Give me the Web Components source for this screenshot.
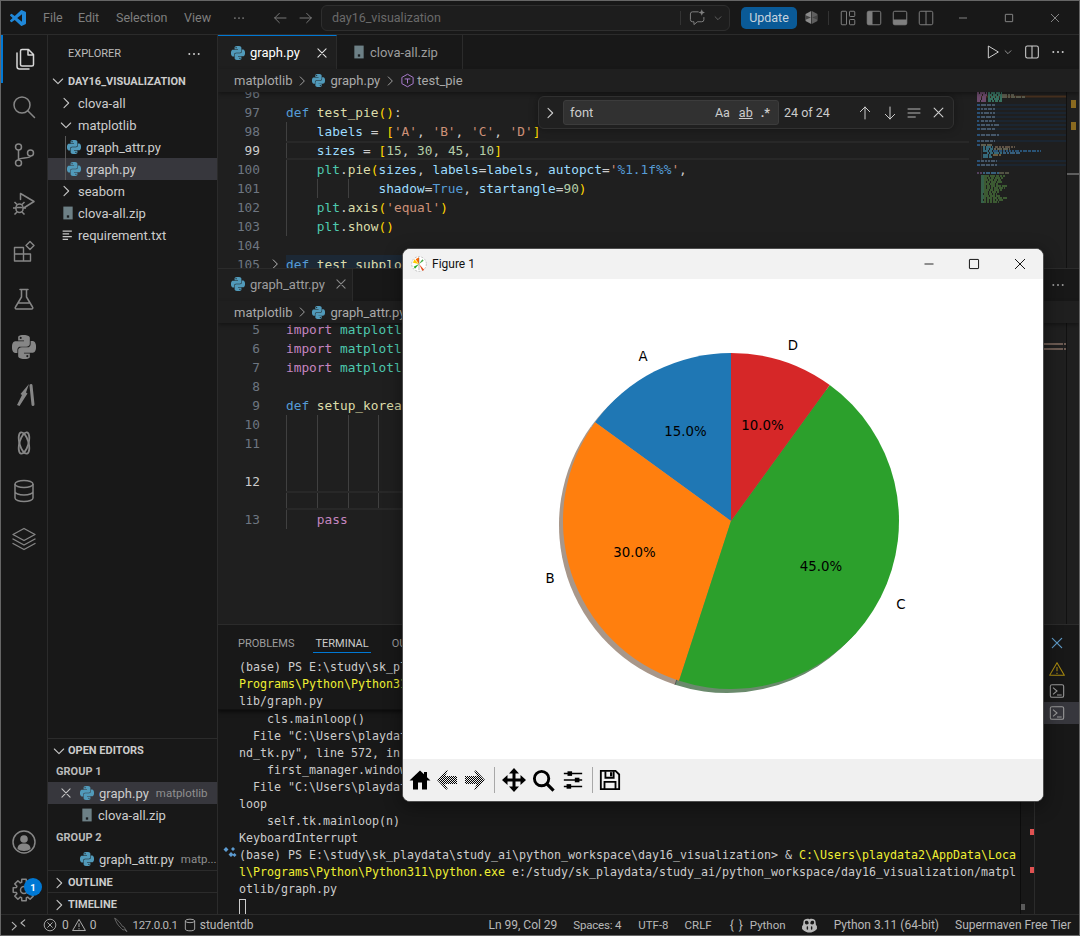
<!DOCTYPE html>
<html lang="en"><head><meta charset="utf-8"><title>VS Code with Figure 1</title>
<style>html,body{margin:0;padding:0;background:#181818}vs-app{display:block}</style></head>
<body><vs-app></vs-app>
<script>
const PY="M14.25.18l.9.2.73.26.59.3.45.32.34.34.25.34.16.33.1.3.04.26.02.2-.01.13V8.5l-.05.63-.13.55-.21.46-.26.38-.3.31-.33.25-.35.19-.35.14-.33.1-.3.07-.26.04-.21.02H8.77l-.69.05-.59.14-.5.22-.41.27-.33.32-.27.35-.2.36-.15.37-.1.35-.07.32-.04.27-.02.21v3.06H3.17l-.21-.03-.28-.07-.32-.12-.35-.18-.36-.26-.36-.36-.35-.46-.32-.59-.28-.73-.21-.88-.14-1.05-.05-1.23.06-1.22.16-1.04.24-.87.32-.71.36-.57.4-.44.42-.33.42-.24.4-.16.36-.1.32-.05.24-.01h.16l.06.01h8.16v-.83H6.18l-.01-2.75-.02-.37.05-.34.11-.31.17-.28.25-.26.31-.23.38-.2.44-.18.51-.15.58-.12.64-.1.71-.06.77-.04.84-.02 1.27.05zm-6.3 1.98l-.23.33-.08.41.08.41.23.34.33.22.41.09.41-.09.33-.22.23-.34.08-.41-.08-.41-.23-.33-.33-.22-.41-.09-.41.09zm13.09 3.95l.28.06.32.12.35.18.36.27.36.35.35.47.32.59.28.73.21.88.14 1.04.05 1.23-.06 1.23-.16 1.04-.24.86-.32.71-.36.57-.4.45-.42.33-.42.24-.4.16-.36.09-.32.05-.24.02-.16-.01h-8.22v.82h5.84l.01 2.76.02.36-.05.34-.11.31-.17.29-.25.25-.31.24-.38.2-.44.17-.51.15-.58.13-.64.09-.71.07-.77.04-.84.01-1.27-.04-1.07-.14-.9-.2-.73-.25-.59-.3-.45-.33-.34-.34-.25-.34-.16-.33-.1-.3-.04-.25-.02-.2.01-.13v-5.34l.05-.64.13-.54.21-.46.26-.38.3-.32.33-.24.35-.2.35-.14.33-.1.3-.06.26-.04.21-.02.13-.01h5.84l.69-.05.59-.14.5-.21.41-.28.33-.32.27-.35.2-.36.15-.36.1-.35.07-.32.04-.28.02-.21V6.07h2.09l.14.01zm-6.47 14.25l-.23.33-.08.41.08.41.23.33.33.23.41.08.41-.08.33-.23.23-.33.08-.41-.08-.41-.23-.33-.33-.23-.41-.08-.41.08z";
function gearPath(){let p=[];const n=8;for(let i=0;i<n;i++){const a=i/n*Math.PI*2;const w=.2;for(const [r,d] of [[8,-.3],[11,-w],[11,w],[8,.3]]){p.push((12+r*Math.cos(a+d)).toFixed(1)+' '+(12+r*Math.sin(a+d)).toFixed(1));}}return 'M'+p.join('L')+'z'}
const s=(d,w=1.5)=>`<path d="${d}" fill="none" stroke="currentColor" stroke-width="${w}" stroke-linecap="round" stroke-linejoin="round"/>`;
const f=d=>`<path d="${d}" fill="currentColor"/>`;
const ICONS={
 py:`<path d="${PY}" fill="#519aba"/>`,
 pygray:f(PY),
 zip:`<path d="M4 1h16v22H4z" fill="#6d8086"/><path d="M10 16h4v4h-4z" fill="#1b1f22"/>`,
 txt:`<path d="M3 4h17M3 9h12M3 14h17M3 19h10" stroke="currentColor" stroke-width="2.4" fill="none"/>`,
 files:s("M10 2.5h6.5l5 5v10a1.5 1.5 0 0 1-1.5 1.5H10a1.5 1.5 0 0 1-1.5-1.5V4A1.5 1.5 0 0 1 10 2.5zM16 2.5V8h5.5M5 6v13.5A2.5 2.5 0 0 0 7.5 22H17"),
 search:s("M15.5 15.5 22.5 22.5")+`<circle cx="10" cy="10" r="8" fill="none" stroke="currentColor" stroke-width="1.5"/>`,
 git:`<g fill="none" stroke="currentColor" stroke-width="1.5"><circle cx="6.5" cy="4" r="3"/><circle cx="6.5" cy="20" r="3"/><circle cx="18.5" cy="10" r="3"/><path d="M6.5 7v10M18.5 13c0 3-12 1-12 4"/></g>`,
 debug:s("M8.5 8.5V2.5L22 10.5 12.5 16.5")+`<g fill="none" stroke="currentColor" stroke-width="1.5"><rect x="4" y="13" width="7" height="8.5" rx="3.5"/><path d="M4 17H1M11 17h3M5 13.5 2.5 11M10 13.5 12.5 11M5 21l-2.5 2.5M10 21l2.5 2.5M4.5 16.5h6"/></g>`,
 ext:s("M2.5 8.5h9v6.5h7v7h-16zM2.5 15h9v7M14 6.500 18 2.500 22 6.500 18 10.500z",1.4),
 flask:s("M8 2.500h8M9.500 2.500V10L3.500 20a1.200 1.200 0 0 0 1 2h15a1.200 1.200 0 0 0 1-2L14.500 10V2.500M6.500 16h11"),
 bolt:`<path d="M5 22 10 12 8.500 11 17 1 14 9.500 15.500 10.500 7.500 23z" fill="currentColor"/><path d="M19 2.500 21 21.500" stroke="currentColor" stroke-width="3" stroke-linecap="round"/>`,
 atom:`<g fill="none" stroke="currentColor" stroke-width="1.800"><ellipse cx="12" cy="12" rx="4.500" ry="11" transform="rotate(16 12 12)"/><ellipse cx="12" cy="12" rx="4.500" ry="11" transform="rotate(-16 12 12)"/></g>`,
 db:`<g fill="none" stroke="currentColor" stroke-width="1.500"><ellipse cx="12" cy="5" rx="9" ry="3.500"/><path d="M3 5v14c0 2 4 3.500 9 3.500s9-1.500 9-3.500V5M3 12.500c0 2 4 3.500 9 3.500s9-1.500 9-3.500"/></g>`,
 layers:s("M12 1.500 23 7.500 12 13.500 1 7.500zM1 12 12 18 23 12M1 16.500 12 22.500 23 16.500",1.4),
 account:`<circle cx="12" cy="12" r="11" fill="none" stroke="currentColor" stroke-width="1.500"/><circle cx="12" cy="9" r="3.800" fill="currentColor"/><path d="M5.500 19c0-4 2.500-5.500 6.500-5.500s6.500 1.500 6.500 5.500c-3 2.500-10 2.500-13 0z" fill="currentColor"/>`,
 gear:`<path d="${gearPath()}" fill="none" stroke="currentColor" stroke-width="1.500" stroke-linejoin="round"/><circle cx="12" cy="12" r="3.500" fill="none" stroke="currentColor" stroke-width="1.500"/>`,
 vsc:`<path d="M23.150 2.587L18.210.21a1.494 1.494 0 0 0-1.705.29l-9.460 8.630-4.120-3.128a.999.999 0 0 0-1.276.057L.327 7.261A1 1 0 0 0 .326 8.740L3.899 12 .326 15.260a1 1 0 0 0 .001 1.479L1.650 17.940a.999.999 0 0 0 1.276.057l4.120-3.128 9.460 8.630a1.492 1.492 0 0 0 1.704.29l4.942-2.377A1.500 1.500 0 0 0 24 20.060V3.939a1.500 1.500 0 0 0-.850-1.352zm-5.146 14.861L10.826 12l7.178-5.448v10.896z" fill="#1f87d8"/>`,
 chevr:s("M9 5l7 7-7 7",1.6),
 chevd:s("M5 9l7 7 7-7",1.6),
 x:s("M5 5l14 14M19 5L5 19",1.8),
 dots:`<circle cx="5" cy="12" r="1.500" fill="currentColor"/><circle cx="12" cy="12" r="1.500" fill="currentColor"/><circle cx="19" cy="12" r="1.500" fill="currentColor"/>`,
 left:s("M21 12H4M11 5l-7 7 7 7",1.4),
 right:s("M3 12h17M13 5l7 7-7 7",1.4),
 up:s("M12 21V3M5 10l7-7 7 7",1.5),
 down:s("M12 3v18M5 14l7 7 7-7",1.5),
 chat:s("M13 4H5a3 3 0 0 0-3 3v8a3 3 0 0 0 3 3h2v4l5-4h6a3 3 0 0 0 3-3v-3",1.4)+f("M18 0.500l1.300 3.200L22.500 5 19.300 6.300 18 9.500 16.700 6.300 13.500 5 16.700 3.700z"),
 hexa:`<path d="M11.500 1.500 2.500 6.500v11l9 5z" fill="#8c8c8c"/><path d="M12.500 1.500 21.500 6.500v11l-9 5z" fill="#5f5f5f"/><path d="M2.500 8.500 11 12 2.500 15.500zM21.500 8.500 13 12 21.500 15.500z" fill="#454545"/>`,
 lay1:`<g fill="none" stroke="currentColor" stroke-width="1.300"><rect x="3" y="3" width="7" height="18" rx="1"/><rect x="14" y="3" width="7" height="7" rx="1"/><rect x="14" y="14" width="7" height="7" rx="1"/></g>`,
 lay2:`<rect x="3" y="3" width="18" height="18" rx="2" fill="none" stroke="currentColor" stroke-width="1.300"/><path d="M3 5a2 2 0 0 1 2-2h5v18H5a2 2 0 0 1-2-2z" fill="currentColor"/>`,
 lay3:`<rect x="3" y="3" width="18" height="18" rx="2" fill="none" stroke="currentColor" stroke-width="1.300"/><path d="M3 14h18v5a2 2 0 0 1-2 2H5a2 2 0 0 1-2-2z" fill="currentColor"/>`,
 lay4:`<rect x="3" y="3" width="18" height="18" rx="2" fill="none" stroke="currentColor" stroke-width="1.300"/><path d="M12 3v18" stroke="currentColor" stroke-width="1.300"/>`,
 min:`<path d="M6 12h12" stroke="currentColor" stroke-width="1.100"/>`,
 max:`<rect x="6.500" y="6.500" width="11" height="11" rx=".6" fill="none" stroke="currentColor" stroke-width="1.100"/>`,
 close:`<path d="M6 6l12 12M18 6 6 18" stroke="currentColor" stroke-width="1.100"/>`,
 run:`<path d="M5 3 20 12 5 21z" fill="none" stroke="currentColor" stroke-width="1.500" stroke-linejoin="round"/>`,
 split:`<rect x="2.500" y="3" width="19" height="18" rx="2.500" fill="none" stroke="currentColor" stroke-width="1.600"/><path d="M12 3v18" stroke="currentColor" stroke-width="1.600"/>`,
 sym:`<path d="M12 2 21 7v10l-9 5-9-5V7z" fill="none" stroke="#b180d7" stroke-width="1.500"/><path d="M7.500 9.500h9M12 9.500v7" stroke="#b180d7" stroke-width="1.500" fill="none"/>`,
 lines:s("M3 6h18M3 12h18M3 18h11",1.3),
 warn:`<path d="M12 2.500 23 21.500H1z" fill="none" stroke="currentColor" stroke-width="1.600" stroke-linejoin="round"/><path d="M12 9v6.500M12 17.500v2" stroke="currentColor" stroke-width="1.600"/>`,
 term:`<rect x="2" y="2.500" width="20" height="19" rx="2.500" fill="none" stroke="currentColor" stroke-width="1.600"/><path d="M6 7l6 5-6 5M12 18h7" fill="none" stroke="currentColor" stroke-width="1.600"/>`,
 error:`<circle cx="12" cy="12" r="10" fill="none" stroke="currentColor" stroke-width="1.500"/><path d="M7.500 7.500l9 9M16.500 7.500l-9 9" stroke="currentColor" stroke-width="1.500"/>`,
 remote:s("M2 7l6.500 6L2 19M22 3l-6 5 6 5",1.800),
 dolphin:s("M3 2c3 1 9 8 11 12l2 .5 5 7.500-4-3-2 .5c-3-3-6-5-9-10z",1),
 cyl:`<g fill="none" stroke="currentColor" stroke-width="1.500"><ellipse cx="12" cy="5" rx="8" ry="3"/><path d="M4 5v14c0 1.800 3.500 3 8 3s8-1.200 8-3V5"/></g>`,
 copilot:`<path d="M12 3C8 2 4 3 3.500 6.500L3 11 1.500 13v4C5 21 9 22 12 22s7-1 10.500-5v-4L21 11l-.5-4.500C20 3 16 2 12 3z" fill="currentColor"/><path d="M5.500 7c0-2 4-2.500 5 0s-.5 3.500-2.500 3.500S5.500 9 5.500 7zM13.500 7c1-2.500 5-2 5 0s-.5 3.500-2.500 3.500-3.500-1-2.500-3.500z" fill="#181818"/><path d="M9 14v3M15 14v3" stroke="#181818" stroke-width="2" stroke-linecap="round"/>`,
 home:f("M12 2.500 1.500 12.500H5v9h5v-7h4v7h5v-9h3.500l-3.500-3.300V4h-3v2.300z"),
 back:`<defs><pattern id="ck" width="2" height="2" patternUnits="userSpaceOnUse"><rect width="1" height="1"/><rect x="1" y="1" width="1" height="1"/></pattern></defs><path d="M2 12 11 2.500 13 2.500 10 8h12v8H10l3 5.500H11z" fill="url(#ck)"/>`,
 fwd:`<defs><pattern id="ck2" width="2" height="2" patternUnits="userSpaceOnUse"><rect width="1" height="1"/><rect x="1" y="1" width="1" height="1"/></pattern></defs><path d="M22 12 13 2.500 11 2.500 14 8H2v8h12l-3 5.500h2z" fill="url(#ck2)"/>`,
 move:f("M12 0 17 5.500H13.500V10.500H18.500V7L24 12 18.500 17V13.500H13.500V18.500H17L12 24 7 18.500H10.500V13.500H5.500V17L0 12 5.500 7V10.500H10.500V5.500H7z"),
 zoom:`<circle cx="10" cy="10" r="7.500" fill="none" stroke="currentColor" stroke-width="3"/><path d="M15.500 15.500 22.500 22.500" stroke="currentColor" stroke-width="3.400"/>`,
 config:`<path d="M2 5h20M2 12h20M2 19h20" stroke="currentColor" stroke-width="1.600"/><rect x="6" y="2.500" width="5" height="5"/><rect x="14" y="9.500" width="5" height="5"/><rect x="5" y="16.500" width="5" height="5"/>`,
 save:`<path d="M2 2h16l4 4v16H2z" fill="none" stroke="currentColor" stroke-width="2"/><path d="M7 2.500v7h9v-7M6 22v-8h12v8" fill="none" stroke="currentColor" stroke-width="2"/><rect x="12" y="3.500" width="2.500" height="4.500"/>`,
 figlogo:`<circle cx="12" cy="12" r="11" fill="#fff" stroke="#999" stroke-width=".8" stroke-dasharray="3 2"/><path d="M12 12 7 5l5-3z" fill="#f60"/><path d="M12 12 3 10l2-5z" fill="#fc0"/><path d="M12 12l8 9-3 1z" fill="#e64a19"/><path d="M12 12l-6 7-2-3z" fill="#2a2"/><path d="M12 12l5-7 2 2z" fill="#4a4"/><path d="M12 3v18" stroke="#666" stroke-width=".7"/>`
};
class VsIcon extends HTMLElement{
 constructor(){super();this.attachShadow({mode:'open'})}
 connectedCallback(){
  const sz=this.getAttribute('size')||16,c=this.getAttribute('color');
  this.shadowRoot.innerHTML=`<style>:host{display:inline-flex;flex:none;width:${sz}px;height:${sz}px;${c?'color:'+c:''}}svg{display:block;width:100%;height:100%}</style><svg viewBox="0 0 24 24">${ICONS[this.getAttribute('name')]||''}</svg>`;
 }
}
customElements.define('vs-icon',VsIcon);
const UI='"Roboto","Liberation Sans",sans-serif';
const MONO='"DejaVu Sans Mono",monospace';

class VsTitlebar extends HTMLElement{constructor(){super();this.attachShadow({mode:'open'}).innerHTML=`<style>
:host{display:flex;align-items:center;height:33px;background:#181818;border-bottom:1px solid #2b2b2b;font:12.5px ${UI};color:#7f7f7f;flex:none}
span.m{flex:none}
.box{height:24px;margin-left:7px;border:1px solid #2e2e2e;border-radius:6px;background:#1d1d1d;display:flex;align-items:center;padding-left:10px;flex:none;box-sizing:content-box;color:#6a6a6a;font-size:12.5px}
.box .t{flex:1}
.d{width:1px;height:14px;background:#333;flex:none}
.upd{background:#0a5a97;color:#c6d3de;width:56px;height:22px;border-radius:5px;display:flex;align-items:center;justify-content:center;font-size:12.5px;margin-left:11px;flex:none}
vs-icon{color:#7f7f7f}
</style>
<vs-icon name="vsc" size="16" style="margin-left:9px"></vs-icon>
<span class="m" style="margin-left:17px;width:35px">File</span><span class="m" style="width:38px">Edit</span><span class="m" style="width:68px">Selection</span><span class="m" style="width:38px">View</span>
<vs-icon name="dots" size="14" style="margin-left:10px"></vs-icon>
<vs-icon name="left" size="16" style="margin-left:26px"></vs-icon><vs-icon name="right" size="16" style="margin-left:10px"></vs-icon>
<div class="box" style="width:397px"><span class="t">day16_visualization</span><span class="d"></span><vs-icon name="chat" size="17" style="margin:0 7px 0 8px"></vs-icon><vs-icon name="chevd" size="10" style="margin-right:6px"></vs-icon></div>
<div class="upd">Update</div>
<vs-icon name="hexa" size="15" style="margin-left:7px"></vs-icon>
<span class="d" style="margin-left:9px"></span>
<vs-icon name="lay1" size="18" style="margin-left:10px"></vs-icon><vs-icon name="lay2" size="18" style="margin-left:8px"></vs-icon><vs-icon name="lay3" size="18" style="margin-left:8px"></vs-icon><vs-icon name="lay4" size="18" style="margin-left:8px"></vs-icon>
<vs-icon name="min" size="16" style="margin-left:20px;color:#aaa"></vs-icon><vs-icon name="max" size="16" style="margin-left:30px;color:#aaa"></vs-icon><vs-icon name="close" size="16" style="margin-left:30px;color:#aaa"></vs-icon>`}}
customElements.define('vs-titlebar',VsTitlebar);

class VsActivity extends HTMLElement{constructor(){super();
 const names=['files','search','git','debug','ext','flask','pygray','bolt','atom','db','layers'];
 this.attachShadow({mode:'open'}).innerHTML=`<style>
:host{display:flex;flex-direction:column;width:46px;background:#181818;border-right:1px solid #2b2b2b;flex:none;color:#868686;position:relative}
.i{height:48px;display:flex;align-items:center;justify-content:center;flex:none;box-sizing:border-box}
.i.on{color:#d7d7d7;border-left:2px solid #0078d4;padding-right:2px}
.sp{flex:1}
.b{position:absolute;left:23px;top:12px;width:18px;height:18px;border-radius:50%;background:#0078d4;color:#fff;font:bold 9.5px ${UI};display:flex;align-items:center;justify-content:center}
.g{position:relative}
.g.i{height:48px}
</style>${names.map((n,i)=>`<div class="i ${i?'':'on'}"><vs-icon name="${n}" size="24"></vs-icon></div>`).join('')}<div class="sp"></div>
<div class="i"><vs-icon name="account" size="24"></vs-icon></div><div class="i g"><vs-icon name="gear" size="24"></vs-icon><span class="b">1</span></div>`}}
customElements.define('vs-activity',VsActivity);

class TreeRow extends HTMLElement{constructor(){super();this.attachShadow({mode:'open'})}
 connectedCallback(){
  const a=n=>this.getAttribute(n);
  const pad=+a('pad')||0,gap=a('gap')||4;
  let ic='';
  if(a('chev'))ic=`<vs-icon name="${a('chev')==='d'?'chevd':'chevr'}" size="16" color="#c5c5c5"></vs-icon>`;
  else if(a('icon'))ic=`<vs-icon name="${a('icon')}" size="${a('isize')||14}" color="#c5c5c5"></vs-icon>`;
  const close=a('close')!==null?`<vs-icon name="x" size="14" color="#c5c5c5" style="margin-right:7px"></vs-icon>`:'';
  this.shadowRoot.innerHTML=`<style>
:host{display:flex;align-items:center;height:22px;font:${a('bold')!==null?'bold 11px':'13px'} ${UI};color:#cccccc;padding-left:${pad}px;white-space:nowrap;overflow:hidden;flex:none;box-sizing:border-box;${a('sel')!==null?'background-color:#37373d;':''}${a('guide')?`background-image:linear-gradient(#585858,#585858);background-size:1px 100%;background-repeat:no-repeat;background-position:${a('guide')}px 0;`:''}}
.l{margin-left:${gap}px}.desc{margin-left:7px;font-size:11.5px;color:#8f8f8f}
</style>${close}${ic}<span class="l"><slot></slot></span>${a('desc')?`<span class="desc">${a('desc')}</span>`:''}`;
 }}
customElements.define('tree-row',TreeRow);

class VsSidebar extends HTMLElement{constructor(){super();this.attachShadow({mode:'open'}).innerHTML=`<style>
:host{display:flex;flex-direction:column;width:169px;background:#181818;border-right:1px solid #2b2b2b;flex:none;font:13px ${UI};color:#ccc;overflow:hidden}
.hd{height:35px;display:flex;align-items:center;padding:2px 15px 0 20px;box-sizing:border-box;font-size:11px;color:#bbb;flex:none;justify-content:space-between}
.sp{flex:1}
.sec{border-top:1px solid #2b2b2b}
.sec tree-row{height:21px;padding-top:2px}
.grp{height:22px;display:flex;align-items:center;padding-left:8px;font:bold 11px ${UI};color:#bbb;flex:none}
</style>
<div class="hd"><span>EXPLORER</span><vs-icon name="dots" size="16" color="#ccc"></vs-icon></div>
<tree-row bold chev="d" pad="2" gap="2">DAY16_VISUALIZATION</tree-row>
<tree-row chev="r" pad="10">clova-all</tree-row>
<tree-row chev="d" pad="10">matplotlib</tree-row>
<tree-row icon="py" pad="19" gap="5" guide="17">graph_attr.py</tree-row>
<tree-row icon="py" pad="19" gap="5" guide="17" sel>graph.py</tree-row>
<tree-row chev="r" pad="10">seaborn</tree-row>
<tree-row icon="zip" pad="13" gap="3">clova-all.zip</tree-row>
<tree-row icon="txt" pad="13" gap="4" isize="13">requirement.txt</tree-row>
<div class="sp"></div>
<div class="sec"><tree-row bold chev="d" pad="3" gap="1">OPEN EDITORS</tree-row></div>
<div class="grp">GROUP 1</div>
<tree-row sel pad="11" icon="py" gap="5" close desc="matplotlib">graph.py</tree-row>
<tree-row pad="32" icon="zip" gap="4">clova-all.zip</tree-row>
<div class="grp">GROUP 2</div>
<tree-row pad="32" icon="py" gap="5" desc="matp...">graph_attr.py</tree-row>
<div class="sec"><tree-row bold chev="r" pad="3" gap="1">OUTLINE</tree-row></div>
<div class="sec"><tree-row bold chev="r" pad="3" gap="1">TIMELINE</tree-row></div>`}}
customElements.define('vs-sidebar',VsSidebar);

const T=(c,t)=>`<span class="${c}">${t}</span>`;
const B1=t=>T('b1',t);
const sp=n=>' '.repeat(n);
const G1=[
 {n:96,t:''},
 {n:97,t:T('k','def')+' '+T('f','test_pie')+B1('()')+':'},
 {n:98,g:[0],t:sp(4)+T('v','labels')+' = '+B1('[')+T('s',"'A'")+', '+T('s',"'B'")+', '+T('s',"'C'")+', '+T('s',"'D'")+B1(']')},
 {n:99,cur:1,g:[0],t:sp(4)+T('v','sizes')+' = '+B1('[')+T('n','15')+', '+T('n','30')+', '+T('n','45')+', '+T('n','10')+B1(']')},
 {n:100,g:[0],t:sp(4)+T('c','plt')+'.'+T('f','pie')+B1('(')+T('v','sizes')+', '+T('v','labels')+'='+T('v','labels')+', '+T('v','autopct')+'='+T('s',"'")+T('esc','%1.1f%%')+T('s',"'")+','},
 {n:101,g:[0,1,2],t:sp(12)+T('v','shadow')+'='+T('k','True')+', '+T('v','startangle')+'='+T('n','90')+B1(')')},
 {n:102,g:[0],t:sp(4)+T('c','plt')+'.'+T('f','axis')+B1('(')+T('s',"'equal'")+B1(')')},
 {n:103,g:[0],t:sp(4)+T('c','plt')+'.'+T('f','show')+B1('()')},
 {n:104,t:''},
 {n:105,fold:1,t:T('k','def')+' '+T('f','test_subplots')+B1('()')+':'},
];
const imp=T('p','import')+' '+T('c','matplotlib');
const G2=[
 {n:5,t:imp},{n:6,t:imp},{n:7,t:imp},{n:8,t:''},
 {n:9,t:T('k','def')+' '+T('f','setup_korean')},
 {n:10,g:[0,1,2,3],t:''},{n:11,g:[0,1,2,3],t:''},{n:'',g:[0,1,2,3],t:''},
 {n:12,bright:1,g:[0,1,2,3],t:''},{n:'',cur:1,g:[0,1,2,3],t:''},
 {n:13,g:[0],t:sp(4)+T('p','pass')},
];
class MiniMap extends HTMLElement{constructor(){super();this.attachShadow({mode:'open'})}
 connectedCallback(){
  const r=(x,y,w,h,c)=>`<rect x="${x}" y="${y}" width="${w}" height="${h}" fill="${c}"/>`;
  let seed=7;const rnd=()=>(seed=(seed*16807)%2147483647)/2147483647;
  const seg=(x,y,w,c)=>{let o='',i=0;while(i<w){const l=Math.min(2+Math.floor(rnd()*4),w-i);o+=r(x+i,y,l,2,c);i+=l+1}return o};
  let h='';
  if(this.getAttribute('kind')==='1'){
   h+=r(8,3.5,89,2,'#47301f');
   [[0,33],[2,38],[4,48],[6,28],[8,26]].forEach(([y,w])=>{h+=seg(8,y,10,'#6b4a6b')+seg(19,y,Math.min(14,w-11),'#37705f')+(w>33?seg(33,y,w-25,'#5b5b4d'):'')});
   for(const y of [12,16,20,24,28,32,36,42,48]){h+=r(8,y,89,2,'#1b2530')+seg(8,y,3,'#2a5177')+seg(12,y,y==32||y==42?18:14,'#46586a')}
   h+=seg(8,52,3,'#2a5177')+seg(12,52,12,'#5f5f50');
   h+=r(12,54,1,14,'#333')+seg(14,54,10,'#35697a')+seg(26,54,20,'#5f5244');
   h+=seg(14,56,10,'#35697a')+seg(25,56,16,'#5f5f50');
   h+=seg(14,58,9,'#35697a')+seg(24,58,48,'#2a5375');
   h+=seg(18,60,16,'#35697a')+seg(34,60,18,'#385f7c');
   h+=seg(14,62,9,'#35697a')+seg(24,62,8,'#6a5c40');
   h+=seg(14,64,9,'#35697a');
   for(const y of [68,72]){h+=r(8,y,89,2,'#1b2530')+seg(8,y,3,'#2a5177')+seg(12,y,16,'#46586a')}
   h+=seg(8,80,5,'#54405e')+seg(14,80,16,'#385f7c')+seg(30,80,10,'#525244');
   [24,22,20,22,18,26,24,22,18,16,20,26,22,18].forEach((w,i)=>{const y=83+i*2;h+=seg(12,y,3,'#36604a')+seg(15,y,w-3,'#3c5a32')});
  }else{
   for(const y of [20,25]){h+=r(74,y,20,2,'#6b5a52')+r(95,y,2,2,'#6b5a52')}
  }
  this.shadowRoot.innerHTML=`<style>:host{display:block;width:97px;flex:none;overflow:hidden}svg{display:block}</style><svg width="97" height="180">${h}</svg>`;
 }}
customElements.define('mini-map',MiniMap);

class FindWidget extends HTMLElement{constructor(){super();this.attachShadow({mode:'open'}).innerHTML=`<style>
:host{position:absolute;left:320px;top:4px;width:416px;height:33px;box-sizing:border-box;background:#202020;border:1px solid #313131;border-radius:6px;display:flex;align-items:center;font:12.5px ${UI};color:#ccc;box-shadow:0 0 8px rgba(0,0,0,.36)}
.inp{margin-left:5px;width:216px;height:25px;box-sizing:border-box;border:1px solid #3c3c3c;border-radius:3px;background:#313131;display:flex;align-items:center;padding-left:6px;font-size:13px;flex:none}
.inp .t{flex:1}.o{flex:none;font-size:12.5px}
.u{text-decoration:underline;margin-right:8px}
.c{margin-left:5px;flex:none;width:60px}
vs-icon{color:#ccc}
</style><vs-icon name="chevr" size="16" style="margin-left:3px"></vs-icon>
<div class="inp"><span class="t">font</span><span class="o" style="margin-right:9px">Aa</span><span class="o u">ab</span><span class="o" style="font-weight:700;margin-right:8px">.*</span></div>
<span class="c">24 of 24</span>
<vs-icon name="up" size="16" style="margin-left:13px"></vs-icon><vs-icon name="down" size="16" style="margin-left:9px"></vs-icon><vs-icon name="lines" size="16" style="margin-left:8px"></vs-icon><vs-icon name="x" size="15" style="margin-left:9px"></vs-icon>`}}
customElements.define('find-widget',FindWidget);

class EditorGroup extends HTMLElement{constructor(){super();this.attachShadow({mode:'open'})}
 connectedCallback(){
  const one=this.getAttribute('kind')==='1';
  const lines=one?G1:G2;
  const guide=g=>{if(!g)return'';const xs=[0,31,62,92];return `background-image:${g.map(()=>'linear-gradient(#404040,#404040)').join(',')};background-size:1px 100%;background-repeat:no-repeat;background-position:${g.map(i=>xs[i]+'px 0').join(',')};`};
  const rows=lines.map(l=>`<div class="row${l.cur?' cur':''}"><span class="num${(l.cur&&l.n)||l.bright?' b':''}">${l.n}</span><span class="fold">${l.fold?'<vs-icon name="chevr" size="14" color="#c5c5c5"></vs-icon>':''}</span><span class="txt${l.fold?' fd':''}" style="${guide(l.g)}">${l.t||' '}</span></div>`).join('');
  const tabs=one?`<div class="tab act top" style="width:119px;padding-left:13px"><vs-icon name="py" size="14"></vs-icon><span style="margin-left:5px;color:#fff;width:65px">graph.py</span><vs-icon name="x" size="14" color="#e6e6e6"></vs-icon></div>
   <div class="tab dim" style="width:126px;padding-left:15px"><vs-icon name="zip" size="14"></vs-icon><span style="margin-left:4px">clova-all.zip</span></div><div class="fill"></div>
   <vs-icon name="run" size="16" color="#ccc" style="margin-right:2px"></vs-icon><vs-icon name="chevd" size="10" color="#ccc" style="margin-right:11px"></vs-icon><vs-icon name="split" size="16" color="#ccc" style="margin-right:10px"></vs-icon><vs-icon name="dots" size="16" color="#ccc" style="margin-right:13px"></vs-icon>`
   :`<div class="tab dim" style="width:135px;padding-left:13px;background:#1f1f1f"><vs-icon name="py" size="14"></vs-icon><span style="margin-left:5px;width:84px">graph_attr.py</span><vs-icon name="x" size="14" color="#8b8b8b"></vs-icon></div><div class="fill"></div><vs-icon name="dots" size="16" color="#999" style="margin-right:13px"></vs-icon>`;
  const crumbs=one?`matplotlib<vs-icon name="chevr" size="14" class="sepc"></vs-icon><vs-icon name="py" size="13"></vs-icon><span class="cm">graph.py</span><vs-icon name="chevr" size="14" class="sepc"></vs-icon><vs-icon name="sym" size="15"></vs-icon><span class="cm" style="margin-left:2px">test_pie</span>`
   :`matplotlib<vs-icon name="chevr" size="14" class="sepc"></vs-icon><vs-icon name="py" size="13"></vs-icon><span class="cm">graph_attr.py</span>`;
  this.shadowRoot.innerHTML=`<style>
:host{display:flex;flex-direction:column;${one?'height:233px':'height:356px;border-top:1px solid #2b2b2b;box-sizing:border-box'};background:#1f1f1f;flex:none;overflow:hidden;font:13px ${UI}}
.tabs{display:flex;align-items:center;height:${one?34:32}px;background:#181818;flex:none}
.tab{display:flex;align-items:center;height:100%;box-sizing:border-box;border-right:1px solid #2b2b2b;flex:none;${one?'':'padding-bottom:2px;'}}
.tab.act{background:#1f1f1f}.top{border-top:1px solid #0078d4}
.dim{color:#9d9d9d}.fill{flex:1;height:100%;box-sizing:border-box;margin-right:20px}
.crumb{display:flex;align-items:center;height:${one?23:22}px;padding-left:16px;color:#a9a9a9;flex:none;position:relative;z-index:2;box-shadow:0 2px 4px rgba(0,0,0,.35);background:#1f1f1f}
.cm{margin-left:5px}.sepc{margin:0 3px 0 3px;color:#a9a9a9}
.body{flex:1;display:flex;position:relative;overflow:hidden;min-height:0}
.code{flex:none;width:751px;overflow:hidden;font:12.8px/19px ${MONO};color:#cccccc}
.in{margin-top:${one?-8.5:-3.5}px}
.row{display:flex;height:19px;white-space:pre}
.num{width:42px;text-align:right;color:#6e7681;flex:none}
.num.b{color:#cccccc}
.fold{width:26px;display:flex;align-items:center;justify-content:center;flex:none;padding-left:4px;box-sizing:border-box}
.txt{flex:1;box-sizing:border-box}
.cur .txt{box-shadow:inset 0 2px 0 #282828,inset 0 -2px 0 #282828}
.fd{background:#1c2835}
.k{color:#569cd6}.f{color:#dcdcaa}.v{color:#9cdcfe}.s{color:#ce9178}.n{color:#b5cea8}.c{color:#4ec9b0}.p{color:#c586c0}.b1{color:#ffd700}.esc{color:#569cd6}
.sb{width:12px;flex:none;border-left:1px solid #111;display:flex;flex-direction:column;background:#1f1f1f}
.mk{width:5px;height:8px;background:#8a6a20;margin-left:4px;flex:none}
.sl{height:2px;background:#5e5e5e;flex:none}
</style><div class="tabs">${tabs}</div><div class="crumb">${crumbs}</div>
<div class="body"><div class="code"><div class="in">${rows}</div></div><div style="width:97px;flex:none"><mini-map kind="${one?1:2}"></mini-map></div><div class="sb">${one?'<div class="mk" style="margin-top:8px"></div><div class="mk" style="margin-top:14px"></div><div class="sl" style="margin-top:43px"></div>':''}</div>${one?'<find-widget></find-widget>':''}</div>`;
 }}
customElements.define('editor-group',EditorGroup);

class TermPanel extends HTMLElement{constructor(){super();
 const y=t=>`<span class="y">${t}</span>`;
 const sticky=[`(base) PS E:\\study\\sk_pl`,y('Programs\\Python\\Python31'),`lib/graph.py`];
 const lines=[`    cls.mainloop()`,`  File "C:\\Users\\playdat`,`nd_tk.py", line 572, in`,`    first_manager.window`,`  File "C:\\Users\\playdat`,`loop`,`    self.tk.mainloop(n)`,`KeyboardInterrupt`,
 `(base) PS E:\\study\\sk_playdata\\study_ai\\python_workspace\\day16_visualization&gt; &amp; `+y('C:\\Users\\playdata2\\AppData\\Loca'),
 y('l\\Programs\\Python\\Python311\\python.exe')+` e:/study/sk_playdata/study_ai/python_workspace/day16_visualization/matpl`,`otlib/graph.py`];
 this.attachShadow({mode:'open'}).innerHTML=`<style>
:host{display:flex;flex-direction:column;height:290px;box-sizing:border-box;border-top:1px solid #2b2b2b;background:#181818;flex:none;overflow:hidden}
.tabs{height:33.5px;display:flex;align-items:flex-start;font:11px ${UI};color:#9d9d9d;flex:none;padding-left:20px;box-sizing:border-box}
.tb{margin-right:21px;padding-top:12px;height:28px;box-sizing:border-box}
.tb.on{color:#ccc;border-bottom:1px solid #0078d4;padding-left:2px;padding-right:2px;margin-left:-2px;margin-right:21px}
.main{flex:1;display:flex;min-height:0}
.t{flex:none;width:802px;font:11.63px/17px ${MONO};color:#cccccc;white-space:pre;overflow:hidden;position:relative;box-sizing:border-box}
.st{padding-left:21px;height:51px;box-shadow:0 2px 4px rgba(0,0,0,.6);box-sizing:border-box;border-bottom:1px solid #111;position:relative;background:#181818}
.ls{padding-left:21px;margin-top:1.500px}
.y{color:#f0f033}
.cursor{display:block;width:7px;height:16px;border:1px solid #ccc;box-sizing:border-box;margin-top:1px}
.deco{position:absolute;left:5px;top:188px}
.rul{width:13px;flex:none;border-left:1px solid #0c0c0c;position:relative}
.m{position:absolute;background:#e05252;width:4px;height:6px;left:9px}
.gm{position:absolute;background:#5a5a5a;width:4px;height:6px;left:0}
.lst{width:44px;flex:none;border-left:1px solid #2b2b2b;display:flex;flex-direction:column;align-items:stretch;margin-top:-27px;background:#181818}
.li{height:22px;display:flex;align-items:center;justify-content:center;flex:none}
.li.on{background:#37373d}
</style>
<div class="tabs"><span class="tb">PROBLEMS</span><span class="tb on">TERMINAL</span><span class="tb">OUTPUT</span></div>
<div class="main"><div class="t"><div class="st">${sticky.map(l=>`<div>${l}</div>`).join('')}</div><div class="ls">${lines.map(l=>`<div>${l}</div>`).join('')}<span class="cursor"></span></div>
<svg class="deco" width="14" height="14" viewBox="0 0 14 14"><path d="M3 0l2.500 2.500L3 5 .5 2.500zM10 0 12 2 10 4 8 2zM8 5l2.500 2.500L8 10 5.500 7.500zM11.500 6l2 2-2 2-2-2z" fill="#5c9bd1"/></svg></div>
<div class="rul"><span class="m" style="top:170px"></span><span class="m" style="top:208px"></span><span class="gm" style="top:245px"></span></div>
<div class="lst"><div class="li"><vs-icon name="x" size="16" color="#5f9bc8"></vs-icon></div><div class="li" style="margin-top:4px"><vs-icon name="warn" size="16" color="#a88a10"></vs-icon></div><div class="li"><vs-icon name="term" size="16" color="#9a9a9a"></vs-icon></div><div class="li on"><vs-icon name="term" size="16" color="#9a9a9a"></vs-icon></div></div></div>`}}
customElements.define('term-panel',TermPanel);

class StatusBar extends HTMLElement{constructor(){super();this.attachShadow({mode:'open'}).innerHTML=`<style>
:host{display:flex;align-items:center;height:21px;box-sizing:border-box;border-top:1px solid #2b2b2b;background:#181818;font:12px ${UI};color:#b8b8b8;flex:none;white-space:nowrap}
span{flex:none}.sp{flex:1}vs-icon{color:#b8b8b8}.n{font-size:11.5px}
</style>
<vs-icon name="remote" size="15" style="margin-left:10px"></vs-icon>
<vs-icon name="error" size="14" style="margin-left:17px"></vs-icon><span style="margin-left:5px">0</span>
<vs-icon name="warn" size="14" style="margin-left:3px"></vs-icon><span style="margin-left:4px">0</span>
<vs-icon name="dolphin" size="16" style="margin-left:16px;color:#8a8a8a"></vs-icon><span class="n" style="margin-left:4px;letter-spacing:-.3px">127.0.0.1</span>
<vs-icon name="cyl" size="14" style="margin-left:5px"></vs-icon><span style="margin-left:3px">studentdb</span>
<span class="sp"></span>
<span>Ln 99, Col 29</span><span class="n" style="margin-left:16px;letter-spacing:-.2px">Spaces: 4</span><span class="n" style="margin-left:17px">UTF-8</span><span class="n" style="margin-left:16px">CRLF</span>
<span style="margin-left:18px;letter-spacing:1px">{ }</span><span class="n" style="margin-left:6px">Python</span>
<vs-icon name="copilot" size="17" style="margin-left:15px"></vs-icon>
<span style="margin-left:16px">Python 3.11 (64-bit)</span><span style="margin-left:16px;margin-right:8px">Supermaven Free Tier</span>`}}
customElements.define('status-bar',StatusBar);

class PieChart extends HTMLElement{constructor(){super();
 const cx=328,cy=242,R=168;
 const pt=(a,ox=0,oy=0)=>{const r=a*Math.PI/180;return (cx+ox+R*Math.cos(r)).toFixed(2)+' '+(cy+oy-R*Math.sin(r)).toFixed(2)};
 const wedge=(a,b,c,ox=0,oy=0)=>`<path d="M${cx+ox} ${cy+oy}L${pt(a,ox,oy)}A${R} ${R} 0 ${b-a>180?1:0} 0 ${pt(b,ox,oy)}Z" fill="${c}"/>`;
 const W=[[90,144,'#1f77b4','#8f9eaa'],[144,252,'#ff7f0e','#a8978a'],[252,414,'#2ca02c','#6a8a6c'],[414,450,'#d62728','#a07a7a']];
 const lab=[['A',240,77],['D',390,66],['B',147,299],['C',498,325]];
 const pct=[['15.0%',282.5,152],['10.0%',359.5,146],['30.0%',231.500,273],['45.0%',418,287]];
 this.attachShadow({mode:'open'}).innerHTML=`<style>:host{display:block;height:480px;background:#fff;flex:none}svg{display:block}text{font:13.33px "DejaVu Sans",sans-serif;fill:#000;text-anchor:middle;dominant-baseline:central}</style>
 <svg width="640" height="480">${W.map(w=>wedge(w[0],w[1],w[3],-4,4)).join('')}<path d="M${cx-4} ${cy+4}L${pt(252,-4,4)}" stroke="#555" stroke-width="1" fill="none"/>${W.map(w=>wedge(w[0],w[1],w[2])).join('')}${lab.concat(pct).map(t=>`<text x="${t[1]}" y="${t[2]}">${t[0]}</text>`).join('')}</svg>`}}
customElements.define('pie-chart',PieChart);

class MplToolbar extends HTMLElement{constructor(){super();
 const ic=(n,m,z=24)=>`<vs-icon name="${n}" size="${z}" style="margin-left:${m}px"></vs-icon>`;
 this.attachShadow({mode:'open'}).innerHTML=`<style>:host{display:flex;align-items:center;height:42px;background:#f0f0f0;flex:none;color:#000;padding-left:3px;box-sizing:border-box}
.s{width:1px;height:26px;background:#a8a8a8;flex:none}</style>
${ic('home',2)}${ic('back',3)}${ic('fwd',4)}<span class="s" style="margin-left:7px"></span>${ic('move',7)}${ic('zoom',6,23)}${ic('config',7,22)}<span class="s" style="margin-left:8px"></span>${ic('save',6,22)}`}}
customElements.define('mpl-toolbar',MplToolbar);

class FigWindow extends HTMLElement{constructor(){super();this.attachShadow({mode:'open'}).innerHTML=`<style>
:host{position:absolute;z-index:10;left:401px;top:247px;width:642px;height:554px;box-sizing:border-box;border:1px solid #4d4d4d;border-radius:8px;overflow:hidden;display:flex;flex-direction:column;background:#fff;box-shadow:0 4px 18px rgba(0,0,0,.45)}
.tb{height:30px;background:#f2f2f2;display:flex;align-items:center;font:12px "Roboto",sans-serif;color:#111;flex:none;padding-left:8px}
.t{flex:1;margin-left:5px}vs-icon{color:#000}
</style><div class="tb"><vs-icon name="figlogo" size="16"></vs-icon><span class="t">Figure 1</span><vs-icon name="min" size="18"></vs-icon><vs-icon name="max" size="20" style="margin-left:26px"></vs-icon><vs-icon name="close" size="20" style="margin-left:26px;margin-right:13px"></vs-icon></div><pie-chart></pie-chart><mpl-toolbar></mpl-toolbar>`}}
customElements.define('fig-window',FigWindow);

class VsApp extends HTMLElement{constructor(){super();this.attachShadow({mode:'open'}).innerHTML=`<style>
:host{display:block;width:1080px;height:936px;box-sizing:border-box;border:1px solid #666;position:relative;overflow:hidden;background:#181818}
.wrap{display:flex;flex-direction:column;height:100%}
.main{flex:1;display:flex;min-height:0}
.ed{flex:1;display:flex;flex-direction:column;min-width:0}
</style><div class="wrap"><vs-titlebar></vs-titlebar><div class="main"><vs-activity></vs-activity><vs-sidebar></vs-sidebar><div class="ed"><editor-group kind="1"></editor-group><editor-group kind="2"></editor-group><term-panel></term-panel></div></div><status-bar></status-bar></div><fig-window></fig-window>`}}
customElements.define('vs-app',VsApp);
</script></body></html>
